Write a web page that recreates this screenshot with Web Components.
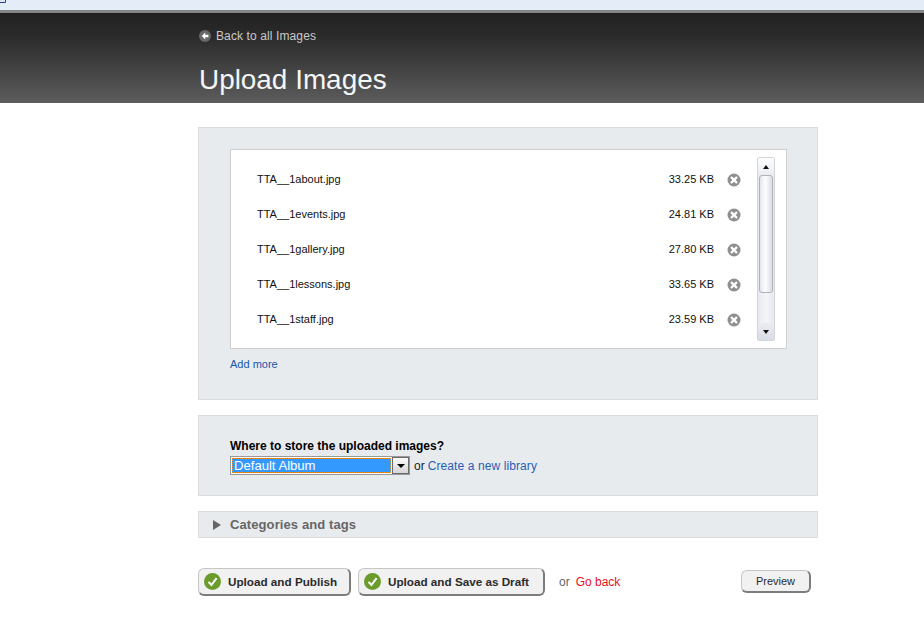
<!DOCTYPE html>
<html lang="en">
<head>
<meta charset="utf-8">
<title>Upload Images</title>
<style>
  html, body { margin: 0; background: #fff; }
  body { font-family: "Liberation Sans", Arial, sans-serif; font-size: 12px; color: #000; }
  main { display: flex; flex-direction: column; width: 620px; margin-left: 198px; padding-top: 24px; }
</style>
</head>
<body>
<ts-topbar></ts-topbar>
<ts-header title="Upload Images" back="Back to all Images"></ts-header>
<main>
  <ts-panel pad="21px 30px 0 31px" height="273px">
    <ts-file-list>
      <ts-file-row name="TTA__1about.jpg" size="33.25 KB"></ts-file-row>
      <ts-file-row name="TTA__1events.jpg" size="24.81 KB"></ts-file-row>
      <ts-file-row name="TTA__1gallery.jpg" size="27.80 KB"></ts-file-row>
      <ts-file-row name="TTA__1lessons.jpg" size="33.65 KB"></ts-file-row>
      <ts-file-row name="TTA__1staff.jpg" size="23.59 KB"></ts-file-row>
    </ts-file-list>
    <ts-link style="display:block;margin-top:9px;font-size:11px">Add more</ts-link>
  </ts-panel>
  <ts-panel pad="23px 31px 0" height="81px" style="margin-top:15px">
    <ts-store></ts-store>
  </ts-panel>
  <ts-collapse label="Categories and tags" style="margin-top:15px"></ts-collapse>
  <ts-actions style="margin-top:30px"></ts-actions>
</main>

<script>
// little helper, every element is just a template + shadow root
function tpl(html) {
  const t = document.createElement('template');
  t.innerHTML = html;
  return t;
}

const _topbar = tpl(`
<style>
  :host { display: block; height: 13px; box-sizing: border-box; background: #e4ecf8; border-bottom: 3px solid #868686; }
  svg { display: block; }
</style>
<svg width="7" height="4" viewBox="0 0 7 4"><rect width="6" height="3" fill="#dfe6f3"/><path d="M0 2.5H5.5V0" fill="none" stroke="#2a3f9a"/></svg>`);

class TsTopbar extends HTMLElement {
  connectedCallback() {
    this.attachShadow({ mode: 'open' }).appendChild(_topbar.content.cloneNode(true));
  }
}
customElements.define('ts-topbar', TsTopbar);

const _header = tpl(`
<style>
  :host { display: flex; flex-direction: column; box-sizing: border-box; height: 90px; padding: 16px 0 0 199px;
    background: linear-gradient(#222 0%, #2a2a2a 25%, #5c5c5c 100%); }
  a { display: flex; align-items: center; gap: 5px; height: 14px; color: #c9c9c9; font-size: 12px; letter-spacing: .11px; text-decoration: none; }
  svg { flex: none; }
  h1 { margin: 21px 0 0; font-weight: normal; font-size: 27.9px; line-height: 32px; color: #f4f6f8; }
</style>
<a href="#"><svg width="12" height="12" viewBox="0 0 12 12"><circle cx="6" cy="6" r="6" fill="#686868"/><path d="M6.2 2.6 2.8 6l3.4 3.4V7.3H9.4V4.7H6.2z" fill="#fff"/></svg><span id="back"></span></a>
<h1 id="title"></h1>`);

class TsHeader extends HTMLElement {
  connectedCallback() {
    const root = this.attachShadow({ mode: 'open' });
    root.appendChild(_header.content.cloneNode(true));
    root.getElementById('back').textContent = this.getAttribute('back');
    root.getElementById('title').textContent = this.getAttribute('title');
  }
}
customElements.define('ts-header', TsHeader);

const _panel = tpl(`
<style>
  :host { display: block; box-sizing: border-box; background: #e8ebee; border: 1px solid #dcdcdc; }
</style>
<slot></slot>`);

class TsPanel extends HTMLElement {
  connectedCallback() {
    this.attachShadow({ mode: 'open' }).appendChild(_panel.content.cloneNode(true));
    this.style.padding = this.getAttribute('pad');
    this.style.height = this.getAttribute('height');
  }
}
customElements.define('ts-panel', TsPanel);

const _link = tpl(`
<style>
  :host { display: inline; }
  a { color: var(--link, #1558b0); text-decoration: none; }
</style>
<a href="#"><slot></slot></a>`);

class TsLink extends HTMLElement {
  connectedCallback() {
    this.attachShadow({ mode: 'open' }).appendChild(_link.content.cloneNode(true));
  }
}
customElements.define('ts-link', TsLink);

const _list = tpl(`
<style>
  :host { display: flex; box-sizing: border-box; width: 557px; height: 200px; background: #fff; border: 1px solid #cfcfcf; }
  .rows { flex: 1; display: flex; flex-direction: column; padding-top: 11px; }
  .bar { flex: none; display: flex; flex-direction: column; box-sizing: border-box; width: 18px; height: 184px; margin: 7px 11px 0 0;
    background: linear-gradient(90deg, #e6eaef, #f3f5f7 50%, #e6eaef); border: 1px solid #d2d6dc; border-radius: 2px; }
  .btn { flex: none; height: 17px; display: flex; align-items: center; justify-content: center; }
  .up { background: linear-gradient(#fdfdfe, #e9edf2); }
  .down { background: linear-gradient(#e9edf2, #d9dde3); }
  .thumb { flex: none; box-sizing: border-box; height: 118px; margin: 0 1px; border: 1px solid #aeb3ba; border-radius: 3px;
    background: linear-gradient(90deg, #e2e6ec, #fcfdfd 45%, #dadee5); }
  .track { flex: 1; }
  i { display: block; width: 0; height: 0; border: 3.5px solid transparent; }
  .up i { border-bottom: 4px solid #111; border-top: 0; }
  .down i { border-top: 4px solid #111; border-bottom: 0; }
</style>
<div class="rows"><slot></slot></div>
<div class="bar">
  <div class="btn up"><i></i></div>
  <div class="thumb"></div>
  <div class="track"></div>
  <div class="btn down"><i></i></div>
</div>`);

class TsFileList extends HTMLElement {
  connectedCallback() {
    this.attachShadow({ mode: 'open' }).appendChild(_list.content.cloneNode(true));
  }
}
customElements.define('ts-file-list', TsFileList);

const _row = tpl(`
<style>
  :host { display: flex; align-items: center; box-sizing: border-box; height: 35px; padding: 0 16px 0 26px; font-size: 11px; color: #111; }
  .name { flex: 1; }
  svg { flex: none; margin: 2px 0 0 13px; }
</style>
<span class="name" id="name"></span>
<span id="size"></span>
<svg width="14" height="14" viewBox="0 0 14 14"><circle cx="7" cy="7" r="6.5" fill="#8f8f8f"/><path d="M4.6 4.6 9.4 9.4M9.4 4.6 4.6 9.4" stroke="#fff" stroke-width="2.2" stroke-linecap="round"/></svg>`);

class TsFileRow extends HTMLElement {
  connectedCallback() {
    const root = this.attachShadow({ mode: 'open' });
    root.appendChild(_row.content.cloneNode(true));
    root.getElementById('name').textContent = this.getAttribute('name');
    root.getElementById('size').textContent = this.getAttribute('size');
  }
}
customElements.define('ts-file-row', TsFileRow);

const _store = tpl(`
<style>
  :host { display: block; }
  label { display: block; font-weight: bold; font-size: 12px; line-height: 14px; color: #000; }
  .line { display: flex; align-items: center; margin-top: 3px; font-size: 12px; }
  .select { display: flex; box-sizing: border-box; width: 180px; height: 19px; background: #fff; border: 1px solid #999; }
  .value { flex: 1; margin: 1px; padding-left: 1px; line-height: 13px; font-size: 13.1px; color: #fff; background: #3399ff;
    border: 1px dotted #f09020; }
  .arrow { flex: none; display: flex; align-items: center; justify-content: center; box-sizing: border-box; width: 17px;
    background: linear-gradient(#fafafa, #d6d6d6); border: 1px solid #6a6a6a; }
  .arrow i { display: block; width: 0; height: 0; border: 4px solid transparent; border-top: 4px solid #000; border-bottom: 0; }
  .or { margin: 0 3px 0 4px; color: #222; }
  ts-link { --link: #2a5db8; letter-spacing: .1px; }
</style>
<label>Where to store the uploaded images?</label>
<div class="line">
  <div class="select"><div class="value">Default Album</div><div class="arrow"><i></i></div></div>
  <span class="or">or</span> <ts-link>Create a new library</ts-link>
</div>`);

class TsStore extends HTMLElement {
  connectedCallback() {
    this.attachShadow({ mode: 'open' }).appendChild(_store.content.cloneNode(true));
  }
}
customElements.define('ts-store', TsStore);

const _collapse = tpl(`
<style>
  :host { display: flex; align-items: center; gap: 9px; box-sizing: border-box; height: 27px; padding-left: 14px;
    background: #e8ebee; border: 1px solid #dcdcdc; color: #666; font-weight: bold; font-size: 13px; letter-spacing: .1px; }
  i { display: block; width: 0; height: 0; border-left: 8px solid #666; border-top: 5px solid transparent; border-bottom: 5px solid transparent; }
</style>
<i></i><span id="label"></span>`);

class TsCollapse extends HTMLElement {
  connectedCallback() {
    const root = this.attachShadow({ mode: 'open' });
    root.appendChild(_collapse.content.cloneNode(true));
    root.getElementById('label').textContent = this.getAttribute('label');
  }
}
customElements.define('ts-collapse', TsCollapse);

const _button = tpl(`
<style>
  :host { display: inline-flex; align-items: center; box-sizing: border-box; height: 28px; padding: 0 0 0 5px; gap: 7px;
    background: #f1f1f1; border: 1px solid #c6c6c6; border-right: 2px solid #7c7c7c; border-bottom: 2px solid #7c7c7c; border-radius: 6px;
    font-weight: bold; font-size: 11.7px; color: #2b2b2b; white-space: nowrap; }
  :host([plain]) { height: 23px; padding: 0 14px; font-weight: normal; font-size: 11px; margin-bottom: 2px; }
  svg { flex: none; }
  :host([plain]) svg { display: none; }
</style>
<svg width="17" height="17" viewBox="0 0 17 17"><circle cx="8.5" cy="8.5" r="8.5" fill="#6b9c2b"/><path d="M4.5 8.8 7.4 12 12.6 5.2" fill="none" stroke="#fff" stroke-width="2"/></svg>
<slot></slot>`);

class TsButton extends HTMLElement {
  connectedCallback() {
    this.attachShadow({ mode: 'open' }).appendChild(_button.content.cloneNode(true));
  }
}
customElements.define('ts-button', TsButton);

const _actions = tpl(`
<style>
  :host { display: flex; align-items: center; gap: 7px; padding-right: 7px; font-size: 12px; }
  .or { margin-left: 7px; color: #666; }
  ts-link { --link: #e8101e; margin-left: -1px; }
  .push { flex: 1; }
</style>
<ts-button style="width:153px">Upload and Publish</ts-button>
<ts-button style="width:187px">Upload and Save as Draft</ts-button>
<span class="or">or</span>
<ts-link>Go back</ts-link>
<span class="push"></span>
<ts-button plain>Preview</ts-button>`);

class TsActions extends HTMLElement {
  connectedCallback() {
    this.attachShadow({ mode: 'open' }).appendChild(_actions.content.cloneNode(true));
  }
}
customElements.define('ts-actions', TsActions);
</script>
</body>
</html>
